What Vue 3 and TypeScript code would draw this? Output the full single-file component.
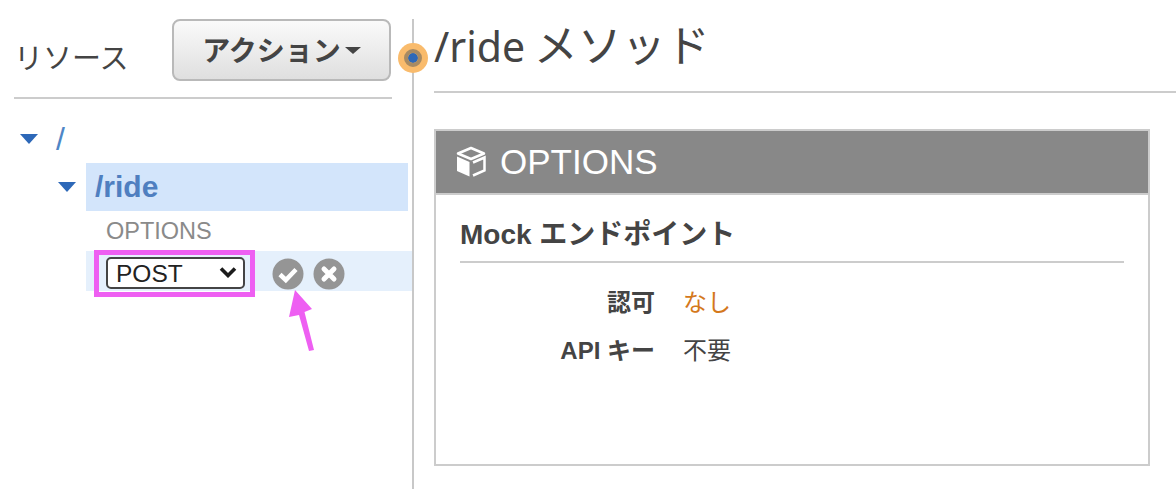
<script setup lang="ts">
const authRows = [
  { label: '認可', value: 'なし', warn: true },
  { label: 'API キー', value: '不要', warn: false },
]
</script>

<template>
  <div class="page">
    <aside class="resources">
      <header class="res-head">
        <h2 class="res-title">リソース</h2>
        <button class="action-btn" type="button">アクション<span class="caret"></span></button>
      </header>

      <div class="tree">
        <div class="root-row">
          <span class="tri"></span>
          <span class="root-link">/</span>
        </div>
        <div class="ride-row">
          <span class="tri"></span>
          <span class="ride-label">/ride</span>
        </div>
        <div class="method">OPTIONS</div>
        <div class="new-method">
          <div class="pick-box">
            <div class="select-wrap">
              <select class="method-select">
                <option>POST</option>
              </select>
              <svg class="chevron" viewBox="0 0 18 12" width="18" height="12">
                <path d="M2 2.5 9 9.5 16 2.5" fill="none" stroke="#1c1c1c" stroke-width="3.6" />
              </svg>
            </div>
          </div>
          <svg class="round-icon ok" viewBox="0 0 32 32" width="32" height="32">
            <circle cx="16" cy="16" r="15.5" fill="#959595" />
            <path d="M8 16.5 13.8 22 24 11.500" fill="none" stroke="#fff" stroke-width="4.500" />
          </svg>
          <svg class="round-icon" viewBox="0 0 32 32" width="32" height="32">
            <circle cx="16" cy="16" r="15.5" fill="#959595" />
            <path d="M11 11 21 21M21 11 11 21" fill="none" stroke="#fff" stroke-width="5" stroke-linecap="round" />
          </svg>
        </div>
      </div>

      <svg class="arrow" viewBox="0 0 40 70" width="40" height="70">
        <path d="M10 5 27 24 19.500 27 29 65 24 66 14 30 4 32Z" fill="#ee5ff2" />
      </svg>
      <span class="focus-dot"><span class="focus-core"></span></span>
    </aside>

    <main class="detail">
      <h1 class="detail-title">/ride <span class="detail-jp">メソッド</span></h1>
      <section class="card">
        <div class="card-head">
          <svg class="cube" viewBox="0 0 32 32" width="32" height="32">
            <path d="M16 2 29 7.500 16 13 3 7.500Z" fill="none" stroke="#fff" stroke-width="2.500" stroke-linejoin="round" />
            <path d="M2 10.500 14.500 16V30.500L2 25Z" fill="#fff" />
            <path d="M18 16.500 29.500 11.500V24.500L18 29.500" fill="none" stroke="#fff" stroke-width="2.500" />
          </svg>
          <span>OPTIONS</span>
        </div>
        <div class="card-body">
          <h3 class="mock-title">Mock エンドポイント</h3>
          <dl class="auth-list">
            <div v-for="row in authRows" :key="row.label" class="auth-row">
              <dt>{{ row.label }}</dt>
              <dd :class="{ warn: row.warn }">{{ row.value }}</dd>
            </div>
          </dl>
        </div>
      </section>
    </main>
  </div>
</template>

<style>
html,
body {
  margin: 0;
  background: #fff;
}
</style>

<style scoped>
.page {
  display: flex;
  width: 1176px;
  height: 489px;
  overflow: hidden;
  font-family: "Liberation Sans", "Noto Sans CJK JP", sans-serif;
  color: #444;
}

.resources {
  position: relative;
  box-sizing: border-box;
  width: 414px;
  height: 470px;
  margin-top: 19px;
  padding-left: 14px;
  border-right: 2px solid #c8c8c8;
  flex: none;
}

.res-head {
  display: flex;
  align-items: flex-end;
  justify-content: space-between;
  box-sizing: border-box;
  width: 378px;
  height: 80px;
  padding: 0 1px 16px 0;
  border-bottom: 2px solid #ccc;
}

.res-title {
  margin: 0 0 2px;
  font-size: 29px;
  font-weight: 400;
  line-height: 40px;
}

.action-btn {
  display: flex;
  align-items: center;
  justify-content: center;
  box-sizing: border-box;
  width: 219px;
  height: 62px;
  padding: 0 0 2px;
  border: 2px solid #b9b9b9;
  border-radius: 8px;
  background: linear-gradient(#fafafa, #dfdfdf);
  color: #444;
  font: bold 28px "Liberation Sans", "Noto Sans CJK JP", sans-serif;
}

.caret {
  width: 0;
  height: 0;
  margin: 3px 0 0 4px;
  border-top: 7px solid #444;
  border-left: 8px solid transparent;
  border-right: 8px solid transparent;
}

.tree {
  padding-top: 20px;
}

.tri {
  display: block;
  flex: none;
  width: 0;
  height: 0;
  border-top: 10px solid #2d68b8;
  border-left: 9px solid transparent;
  border-right: 9px solid transparent;
}

.root-row {
  display: flex;
  align-items: center;
  gap: 18px;
  height: 40px;
  padding-left: 6px;
  color: #4f86c6;
  font-size: 32px;
}

.ride-row {
  display: flex;
  align-items: center;
  gap: 19px;
  width: 350px;
  height: 48px;
  margin: 4px 0 0 44px;
  background: linear-gradient(to right, transparent 28px, #d3e5fb 28px);
  color: #4f7fc0;
  font-size: 30px;
  font-weight: 700;
}

.method {
  height: 40px;
  padding-left: 92px;
  color: #8a8a8a;
  font-size: 23.5px;
  line-height: 40px;
}

.new-method {
  display: flex;
  align-items: flex-start;
  width: 326px;
  height: 40px;
  margin-left: 72px;
  background: #e5f0fc;
}

.pick-box {
  box-sizing: border-box;
  width: 161px;
  height: 47px;
  margin: -1px 0 0 8px;
  padding: 2px 0 0 7px;
  border: 5px solid #ee5ff2;
  flex: none;
}

.select-wrap {
  position: relative;
  width: 139px;
}

.method-select {
  display: block;
  box-sizing: border-box;
  width: 139px;
  height: 32px;
  padding: 0 0 0 8px;
  border: 2px solid #444;
  border-radius: 5px;
  background: #fff;
  appearance: none;
  color: #222;
  font: 24.5px "Liberation Sans", sans-serif;
}

.chevron {
  position: absolute;
  top: 9px;
  right: 8px;
}

.round-icon {
  flex: none;
  margin: 7px 0 0 9px;
}

.round-icon.ok {
  margin-left: 17px;
}

.arrow {
  position: absolute;
  left: 285px;
  top: 266px;
}

.focus-dot {
  position: absolute;
  left: 398px;
  top: 24px;
  z-index: 1;
  display: flex;
  align-items: center;
  justify-content: center;
  width: 30px;
  height: 30px;
  border-radius: 50%;
  background: #f9bb6c;
}

.focus-core {
  box-sizing: border-box;
  width: 18px;
  height: 18px;
  border: 4px solid #a78a63;
  border-radius: 50%;
  background: #2d68b8;
  background-clip: padding-box;
}

.detail {
  flex: 1;
  padding: 19px 26px 0 20px;
  min-width: 0;
}

.detail-title {
  box-sizing: border-box;
  height: 74px;
  margin: 0 -26px 36px 0;
  border-bottom: 2px solid #ccc;
  font-family: "Noto Sans", "Noto Sans CJK JP", sans-serif;
  font-size: 41px;
  font-weight: 400;
  line-height: 52px;
  word-spacing: -2px;
}

.detail-jp {
  font-size: 44px;
}

.card {
  box-sizing: border-box;
  height: 337px;
  border: 2px solid #ccc;
}

.card-head {
  display: flex;
  align-items: center;
  gap: 13px;
  height: 62px;
  padding-left: 19px;
  border-bottom: 2px solid #ccc;
  background: #888;
  color: #fff;
  font-size: 35px;
}

.card-body {
  padding: 0 24px;
}

.mock-title {
  height: 68px;
  margin: 0;
  border-bottom: 2px solid #ccc;
  box-sizing: border-box;
  font-size: 28px;
  font-weight: 700;
  line-height: 80px;
}

.auth-list {
  margin: 16px 0 0;
}

.auth-row {
  display: flex;
  gap: 28px;
  height: 48px;
  font-size: 24px;
  line-height: 48px;
}

.auth-row dt {
  width: 195px;
  font-weight: 700;
  text-align: right;
}

.auth-row dd {
  margin: 0;
}

.auth-row dd.warn {
  color: #d4781c;
}
</style>
